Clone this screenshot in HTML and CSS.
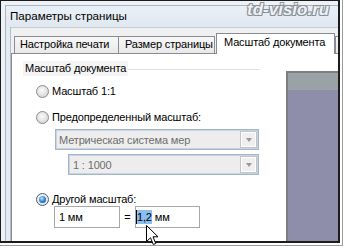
FILE: index.html
```html
<!DOCTYPE html>
<html lang="ru">
<head>
<meta charset="utf-8">
<title>Параметры страницы</title>
<link rel="stylesheet" href="styles.css">
</head>
<body>
<div class="shot">
  <div class="box">
    <div class="window">
      <div class="titlebar"><span class="title">Параметры страницы</span></div>
      <div class="body">
        <div class="glass"></div>
        <div class="client">
          <div class="tabs">
            <div class="tab t1">Настройка печати</div>
            <div class="tab t2">Размер страницы</div>
            <div class="tab active">Масштаб документа</div>
            <div class="tab t4"><span class="frag"></span></div>
          </div>
          <div class="panel">
            <div class="left">
              <div class="group"><span class="glabel">Масштаб документа</span><span class="gline"></span></div>
              <div class="rrow r1"><span class="radio"></span><span>Масштаб 1:1</span></div>
              <div class="rrow r2"><span class="radio"></span><span>Предопределенный масштаб:</span></div>
              <div class="combo c1"><span class="ctext">Метрическая система мер</span><span class="cbtn"><span class="arrow"></span></span></div>
              <div class="combo c2"><span class="ctext">1 : 1000</span><span class="cbtn"><span class="arrow"></span></span></div>
              <div class="rrow r3"><span class="radio on"><span class="dot"></span></span><span>Другой масштаб:</span></div>
              <div class="inputs">
                <div class="inp inp1">1 мм</div>
                <div class="eq">=</div>
                <div class="inp inp2"><span class="sel">1,2</span>&nbsp;мм</div>
              </div>
            </div>
            <div class="preview"><div class="ptop"></div></div>
          </div>
        </div>
      </div>
    </div>
  </div>
  <div class="watermark">td-visio.ru</div>
  <svg class="cursor" width="14" height="22" viewBox="0 0 14 22"><path d="M0.5 0.5 L0.5 16.5 L4.5 12.8 L7.3 19.5 L9.8 18.5 L7 11.8 L12 11.8 Z" fill="#fff" stroke="#000" stroke-width="1" stroke-linejoin="miter"/></svg>
</div>
</body>
</html>
```
FILE: styles.css
```css
* { box-sizing: border-box; }
html, body { margin: 0; padding: 0; }
body {
  width: 343px;
  height: 246px;
  overflow: hidden;
  background: #fff;
  font-family: "Liberation Sans", Arial, sans-serif;
  font-size: 11px;
  letter-spacing: -0.15px;
  color: #000;
}
.shot {
  position: relative;
  width: 343px;
  height: 246px;
  border-right: 1px solid #9c9c9c;
  border-bottom: 1px solid #9c9c9c;
}
.box {
  width: 340px;
  height: 243px;
  border-style: solid;
  border-color: #1c1c1c;
  border-width: 1px 2px 2px 1px;
  background: #eef2f6;
  padding: 4px 0 0 4px;
  display: flex;
  overflow: hidden;
}
.window {
  flex: 1;
  min-width: 0;
  display: flex;
  flex-direction: column;
  border-left: 1px solid #a9b6c5;
  border-top: 1px solid #a9b6c5;
  background: #e3eaf2;
}
.titlebar {
  height: 21px;
  padding: 2px 0 0 4px;
  line-height: 15px;
  font-size: 11.6px;
  letter-spacing: 0;
  background: linear-gradient(#eaf0f6, #dfe7f0);
  white-space: nowrap;
}
.body {
  flex: 1;
  min-height: 0;
  display: flex;
}
.glass {
  width: 5px;
  border-right: 1px solid #b3bdc8;
  background: #e4ebf2;
}
.client {
  flex: 1;
  min-width: 0;
  display: flex;
  flex-direction: column;
  background: #f0f0f0;
  border-top: 1px solid #c6ced8;
  overflow: hidden;
}
.tabs {
  height: 25px;
  display: flex;
  align-items: flex-end;
  padding-left: 3px;
  flex-shrink: 0;
}
.tab {
  flex-shrink: 0;
  height: 17px;
  border: 1px solid #898c95;
  border-bottom: none;
  background: linear-gradient(#f7f7f7, #e9e9e9);
  line-height: 14px;
  white-space: nowrap;
  overflow: hidden;
}
.t1 { width: 105px; padding-left: 5px; }
.t2 { width: 97px; margin-left: -1px; padding-left: 6px; }
.active {
  position: relative;
  z-index: 1;
  width: 119px;
  height: 21px;
  margin-left: 1px;
  margin-bottom: -1px;
  padding: 1px 0 0 7px;
  background: #fff;
  line-height: 15px;
}
.t4 { width: 30px; margin-left: 0; padding: 6px 0 0 2px; }
.frag {
  display: block;
  width: 2px;
  height: 6px;
  background: #3c3550;
}
.panel {
  flex: 1;
  display: flex;
  background: #fff;
  border-top: 1px solid #898c95;
  border-left: 1px solid #898c95;
}
.left {
  width: 247px;
  flex-shrink: 0;
  display: flex;
  flex-direction: column;
}
.group {
  display: flex;
  margin: 7px 0 0 11px;
  height: 15px;
  line-height: 15px;
}
.glabel {
  padding: 0 2px;
  background: #f4f4f4;
  white-space: nowrap;
}
.gline {
  flex: 1;
  height: 1px;
  margin-top: 8px;
  background: #d5dfe6;
}
.rrow {
  display: flex;
  align-items: center;
  gap: 3px;
  height: 15px;
  line-height: 15px;
  margin-left: 24px;
  white-space: nowrap;
}
.r1 { margin-top: 8px; }
.r2 { margin-top: 11px; }
.r3 { margin-top: 17px; }
.radio {
  width: 13px;
  height: 13px;
  flex-shrink: 0;
  border-radius: 50%;
  border: 1px solid #8b8b8b;
  background: radial-gradient(circle at 45% 40%, #fbfbfb 0, #e6e6e6 45%, #c9c9c9 100%);
  display: flex;
  align-items: center;
  justify-content: center;
}
.radio.on {
  border-color: #4c607a;
  background: radial-gradient(circle at 45% 40%, #ffffff 0, #e4e9ef 60%, #c2ccd8 100%);
}
.dot {
  width: 7px;
  height: 7px;
  border-radius: 50%;
  background: radial-gradient(circle at 40% 35%, #bfe6ff 0, #3d8fd8 45%, #0f3f78 100%);
}
.combo {
  display: flex;
  align-items: center;
  height: 21px;
  border: 1px solid #a5b6ca;
  box-shadow: inset 0 0 0 1px #c8d4e2;
  background: #ededed;
  color: #6d6d6d;
  padding: 0 1px 0 3px;
  white-space: nowrap;
}
.c1 { margin: 4px 0 0 43px; width: 204px; }
.c2 { margin: 4px 0 0 56px; width: 191px; padding-left: 4px; }
.cbtn {
  margin-left: auto;
  width: 17px;
  height: 17px;
  border: 1px solid #c4c4c4;
  box-shadow: inset 0 0 0 1px #fff;
  background: #efefef;
  display: flex;
  align-items: center;
  justify-content: center;
}
.arrow {
  width: 0;
  height: 0;
  border-left: 3.5px solid transparent;
  border-right: 3.5px solid transparent;
  border-top: 4px solid #9a9a9a;
}
.inputs {
  display: flex;
  align-items: center;
  margin: -1px 0 0 42px;
  height: 22px;
}
.inp {
  height: 22px;
  border: 1px solid #a8a8a8;
  background: #fff;
  display: flex;
  align-items: center;
  line-height: 15px;
  white-space: nowrap;
}
.inp1 { width: 66px; padding-left: 4px; }
.eq { width: 15px; text-align: center; line-height: 15px; }
.inp2 { width: 65px; padding-left: 0; }
.sel {
  display: inline-block;
  height: 14px;
  line-height: 14px;
  background: #8bbdee;
  border-left: 1px solid #000;
}
.preview {
  flex: 1;
  margin: 17px 0 0 27px;
  border-left: 2px solid #7e7e7e;
  border-top: 2px solid #7e7e7e;
  background: #8e8eab;
}
.ptop {
  height: 17px;
  background: #9aa2a5;
}
.watermark {
  position: absolute;
  left: 247px;
  top: 0px;
  font-family: "Liberation Sans", sans-serif;
  font-weight: bold;
  font-style: italic;
  font-size: 17px;
  line-height: 20px;
  letter-spacing: 0;
  color: #eef2f6;
  text-shadow: 1px 1px 0 #8a9097, -1px -1px 0 #8a9097, 1px -1px 0 #8a9097, -1px 1px 0 #8a9097;
  white-space: nowrap;
}
.cursor {
  position: absolute;
  left: 146px;
  top: 225px;
}
```
